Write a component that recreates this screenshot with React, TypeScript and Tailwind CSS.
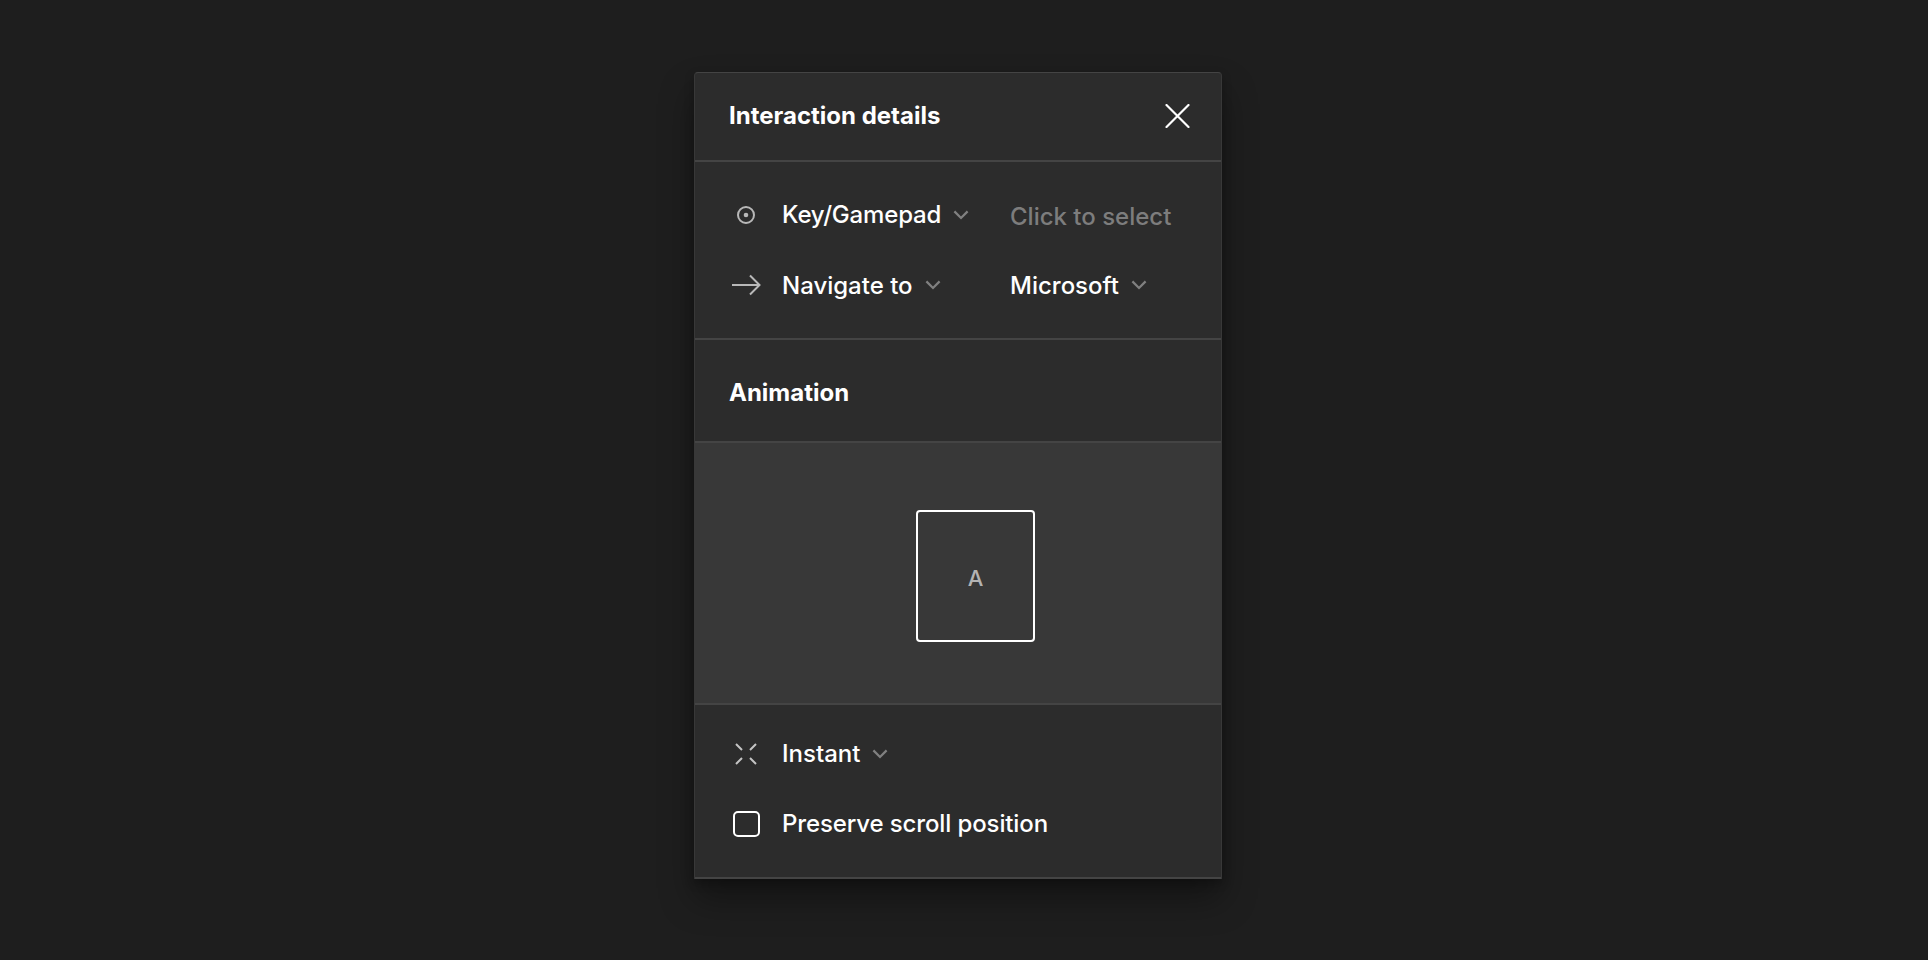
import type { ReactNode } from "react";

function Chevron({ className = "" }: { className?: string }) {
  return (
    <svg width="16" height="10" viewBox="0 0 16 10" fill="none" className={"shrink-0 " + className}>
      <path d="M1.4 1.4L8 8L14.6 1.4" stroke="#808080" strokeWidth="2.2" />
    </svg>
  );
}

function IconSlot({ children }: { children: ReactNode }) {
  return <span className="flex w-8 shrink-0 items-center justify-center">{children}</span>;
}

export default function App() {
  return (
    <main className="flex h-[960px] w-full justify-center bg-[#1e1e1e] pt-[72px] pr-3 font-['Inter',sans-serif] text-2xl font-[450] text-white antialiased">
      <section className="flex h-[807px] w-[528px] flex-col rounded-t-[4px] border-x border-t border-[#383838] border-t-[#444444] bg-[#2c2c2c] shadow-[0_20px_34px_rgba(0,0,0,0.35),0_4px_10px_rgba(0,0,0,0.25)]">
        <header className="flex h-[89px] shrink-0 items-center justify-between border-b-2 border-[#444444] pr-[31px] pb-[2px] pl-[34px]">
          <h1 className="font-bold">Interaction details</h1>
          <svg width="25" height="24" viewBox="0 0 25 24" fill="none">
            <path d="M1.5 1L23.5 23M23.5 1L1.5 23" stroke="#fff" strokeWidth="2.2" strokeLinecap="round" />
          </svg>
        </header>

        <div className="flex h-[178px] shrink-0 flex-col border-b-2 border-[#444444] py-[18px] pl-[35px]">
          <div className="flex h-[70px] items-center">
            <div className="flex w-[280px] items-center">
              <IconSlot>
                <svg width="18" height="18" viewBox="0 0 18 18" fill="none">
                  <circle cx="9" cy="9" r="8" stroke="#b8b8b8" strokeWidth="2" />
                  <circle cx="9" cy="9" r="2.3" fill="#b8b8b8" />
                </svg>
              </IconSlot>
              <span className="ml-5 tracking-[-0.007em]">Key/Gamepad</span>
              <Chevron className="ml-3" />
            </div>
            <span className="pt-[3px] text-[#7d7d7d]">Click to select</span>
          </div>
          <div className="flex h-[70px] items-center">
            <div className="flex w-[280px] items-center">
              <IconSlot>
                <svg width="30" height="22" viewBox="0 0 30 22" fill="none">
                  <path d="M1 11H28.5M19 1.5L28.5 11L19 20.5" stroke="#b8b8b8" strokeWidth="2" />
                </svg>
              </IconSlot>
              <span className="ml-5 pt-[2px]">Navigate to</span>
              <Chevron className="ml-3" />
            </div>
            <span className="pt-[2px]">Microsoft</span>
            <Chevron className="ml-3" />
          </div>
        </div>

        <div className="flex h-[103px] shrink-0 items-center border-b-2 border-[#444444] pt-1 pl-[34px]">
          <h2 className="font-bold">Animation</h2>
        </div>

        <div className="flex h-[262px] shrink-0 items-start border-b-2 border-[#444444] bg-[#383838] pt-[67px] pl-[221px]">
          <div className="flex h-[132px] w-[119px] items-center justify-center rounded-[4px] border-2 border-white pt-[6px] text-[22px] text-[#b3b3b3]">
            A
          </div>
        </div>

        <div className="flex grow flex-col border-b-2 border-[#444444] pt-[14px] pl-[35px]">
          <div className="flex h-[70px] items-center">
            <IconSlot>
              <svg width="22" height="22" viewBox="0 0 22 22" fill="none">
                <path d="M1 1L7 7M21 1L15 7M1 21L7 15M21 21L15 15" stroke="#c4c4c4" strokeWidth="2" />
              </svg>
            </IconSlot>
            <span className="ml-5">Instant</span>
            <Chevron className="ml-3" />
          </div>
          <label className="flex h-[70px] items-center">
            <IconSlot>
              <span className="h-[26px] w-[27px] rounded-[5px] border-2 border-white" />
            </IconSlot>
            <span className="ml-5 tracking-[-0.005em]">Preserve scroll position</span>
          </label>
        </div>
      </section>
    </main>
  );
}
